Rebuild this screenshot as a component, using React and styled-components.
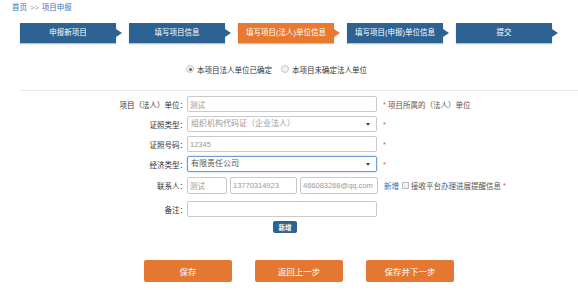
import React from 'react';
import styled, { createGlobalStyle } from 'styled-components';

const GlobalStyle = createGlobalStyle`
  body {
    margin: 0;
    background: #fff;
    font-family: "Liberation Sans", "Noto Sans CJK SC", sans-serif;
    color: #333;
  }
`;

const Page = styled.div`
  width: 578px;
  height: 290px;
  overflow: hidden;
`;

const Breadcrumb = styled.div`
  padding: 2px 0 0 12px;
  height: 12px;
  line-height: 12px;
  font-size: 7.5px;
  color: #3b72b4;
`;

const Sep = styled.span`
  color: #999;
  margin: 0 3px;
`;

const Steps = styled.div`
  display: flex;
  gap: 13px;
  margin: 9px 0 0 20px;
`;

const Step = styled.div`
  position: relative;
  width: 96px;
  height: 20px;
  line-height: 20px;
  text-align: center;
  font-size: 7.5px;
  color: #fff;
  background: ${(p) => (p.$active ? '#e8792f' : '#2c6393')};
  box-shadow: 0 1px 1px rgba(0, 0, 0, 0.25);

  &::after {
    content: '';
    position: absolute;
    right: -6px;
    top: 6px;
    border-top: 4px solid transparent;
    border-bottom: 4px solid transparent;
    border-left: 6px solid ${(p) => (p.$active ? '#e8792f' : '#2c6393')};
  }
`;

const RadioRow = styled.div`
  display: flex;
  align-items: center;
  gap: 9px;
  margin-top: 20px;
  padding-left: 186px;
  height: 12px;
  font-size: 7.5px;
  color: #333;
`;

const RadioItem = styled.label`
  display: flex;
  align-items: center;
  gap: 3px;
`;

const Radio = styled.span`
  width: 6px;
  height: 6px;
  border-radius: 50%;
  border: 1px solid #c8c8c8;
  background: #f1f1f1;
  display: flex;
  align-items: center;
  justify-content: center;

  &::after {
    content: '';
    width: 3px;
    height: 3px;
    border-radius: 50%;
    background: ${(p) => (p.$checked ? '#666' : 'transparent')};
  }
`;

const Divider = styled.div`
  margin: 15px 0 0 20px;
  height: 1px;
  background: #e6e6e6;
`;

const Form = styled.div`
  margin-top: 5px;
  display: flex;
  flex-direction: column;
`;

const Row = styled.div`
  display: flex;
  align-items: center;
  height: ${(p) => p.$h || 16}px;
  margin-top: ${(p) => p.$mt ?? 4}px;
`;

const Label = styled.div`
  width: 187px;
  flex-shrink: 0;
  text-align: right;
  font-size: 7.5px;
  color: #333;
`;

const Input = styled.input`
  box-sizing: border-box;
  width: ${(p) => p.$w || 190}px;
  height: 100%;
  border: 1px solid #c9c9c9;
  border-radius: 2px;
  padding: 0 2px;
  font-family: inherit;
  font-size: 7.5px;
  color: #999;
  outline: none;
  background: #fff;
`;

const SelectBox = styled.div`
  box-sizing: border-box;
  position: relative;
  width: 190px;
  height: 100%;
  border: 1px solid ${(p) => (p.$focus ? '#6f9ed6' : '#c9c9c9')};
  box-shadow: ${(p) => (p.$focus ? '0 0 2px rgba(80, 140, 210, 0.6)' : 'none')};
  border-radius: 2px;
  padding: 0 3px;
  font-size: 8px;
  line-height: 14px;
  color: ${(p) => (p.$focus ? '#555' : '#999')};

  &::after {
    content: '';
    position: absolute;
    right: 6px;
    top: 6px;
    border-left: 2.5px solid transparent;
    border-right: 2.5px solid transparent;
    border-top: 3px solid #444;
  }
`;

const Star = styled.span`
  color: #e84c4c;
  font-size: 7.5px;
  margin: 0 2px 0 ${(p) => p.$ml ?? 6}px;
`;

const Note = styled.span`
  font-size: 7.5px;
  color: #555;
`;

const Contacts = styled.div`
  display: flex;
  gap: 3px;
  height: 100%;
`;

const Link = styled.span`
  font-size: 7.5px;
  color: #2f6db5;
  margin: 0 3px 0 6px;
`;

const Check = styled.span`
  width: 5px;
  height: 5px;
  border: 1px solid #bbb;
  background: #f2f2f2;
  margin-right: 2px;
`;

const SmallRow = styled.div`
  display: flex;
  justify-content: flex-start;
  padding-left: 273px;
  margin-top: 4px;
`;

const AddButton = styled.button`
  width: 24px;
  height: 12px;
  padding: 0;
  border: none;
  border-radius: 2px;
  background: #2c6393;
  color: #fff;
  font-family: inherit;
  font-size: 6.5px;
  font-weight: bold;
`;

const Actions = styled.div`
  display: flex;
  gap: 23px;
  padding-left: 144px;
  margin-top: 27px;
`;

const ActionButton = styled.button`
  width: 88px;
  height: 22px;
  padding: 0;
  border: none;
  border-radius: 2px;
  background: #e47833;
  color: #fff;
  font-family: inherit;
  font-size: 8.5px;
`;

const steps = ['申报新项目', '填写项目信息', '填写项目(法人)单位信息', '填写项目(申报)单位信息', '提交'];

export default function App() {
  return (
    <Page>
      <GlobalStyle />
      <Breadcrumb>
        首页<Sep>&gt;&gt;</Sep>项目申报
      </Breadcrumb>
      <Steps>
        {steps.map((s, i) => (
          <Step key={s} $active={i === 2}>
            {s}
          </Step>
        ))}
      </Steps>
      <RadioRow>
        <RadioItem>
          <Radio $checked />
          本项目法人单位已确定
        </RadioItem>
        <RadioItem>
          <Radio />
          本项目未确定法人单位
        </RadioItem>
      </RadioRow>
      <Divider />
      <Form>
        <Row $mt={0}>
          <Label>项目（法人）单位：</Label>
          <Input defaultValue="测试" />
          <Star>*</Star>
          <Note>项目所属的（法人）单位</Note>
        </Row>
        <Row>
          <Label>证照类型：</Label>
          <SelectBox>组织机构代码证（企业法人）</SelectBox>
          <Star>*</Star>
        </Row>
        <Row>
          <Label>证照号码：</Label>
          <Input defaultValue="12345" />
          <Star>*</Star>
        </Row>
        <Row>
          <Label>经济类型：</Label>
          <SelectBox $focus>有限责任公司</SelectBox>
          <Star>*</Star>
        </Row>
        <Row $h={17} $mt={5}>
          <Label>联系人：</Label>
          <Contacts>
            <Input $w={40} defaultValue="测试" />
            <Input $w={67} defaultValue="13770314923" />
            <Input $w={78} defaultValue="466083268@qq.com" />
          </Contacts>
          <Link>新增</Link>
          <Check />
          <Note>接收平台办理进展提醒信息</Note>
          <Star $ml={2}>*</Star>
        </Row>
        <Row $mt={7}>
          <Label>备注：</Label>
          <Input defaultValue="" />
        </Row>
        <SmallRow>
          <AddButton>新增</AddButton>
        </SmallRow>
      </Form>
      <Actions>
        <ActionButton>保存</ActionButton>
        <ActionButton>返回上一步</ActionButton>
        <ActionButton>保存并下一步</ActionButton>
      </Actions>
    </Page>
  );
}
